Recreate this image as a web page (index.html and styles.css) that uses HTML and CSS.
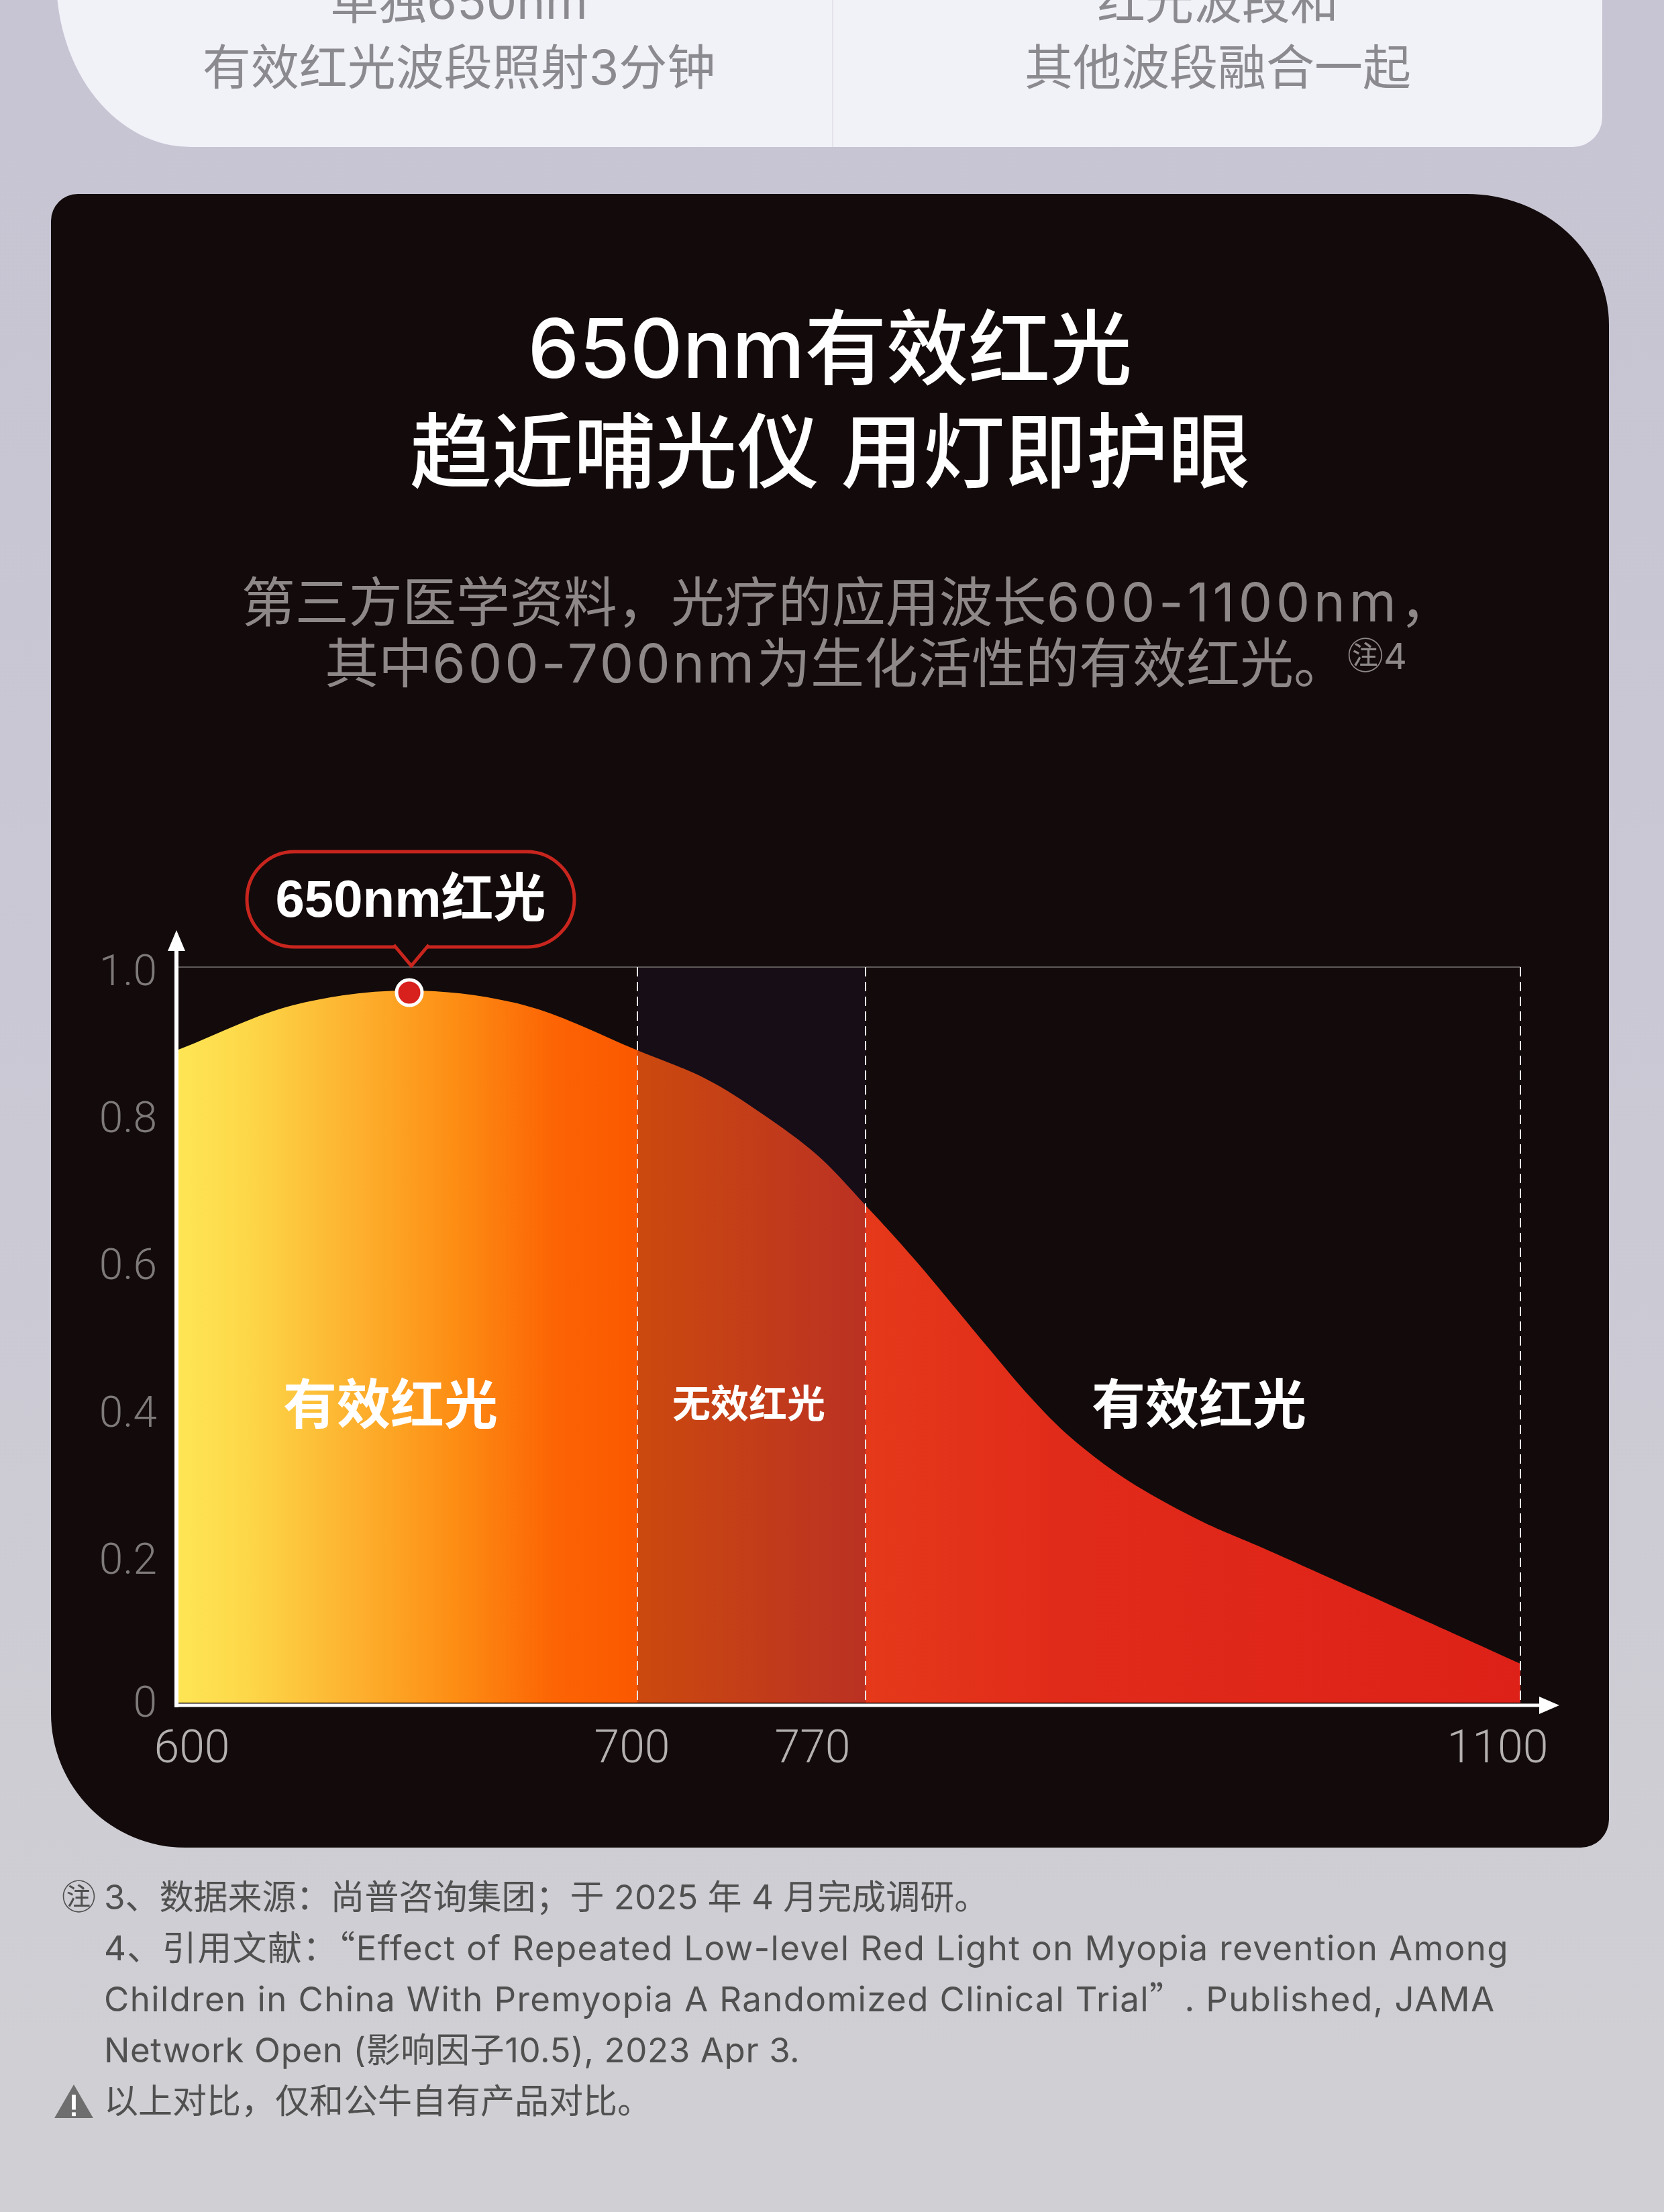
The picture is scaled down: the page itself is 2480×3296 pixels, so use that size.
FILE: index.html
```html
<!DOCTYPE html>
<html lang="zh-CN">
<head>
<meta charset="utf-8">
<title>650nm有效红光</title>
<link rel="stylesheet" href="styles.css">
</head>
<body>
<div class="compare">
  <div class="compare-col left">
    <div>单独650nm</div>
    <div>有效红光波段照射3分钟</div>
  </div>
  <div class="compare-col right">
    <div>红光波段和</div>
    <div>其他波段融合一起</div>
  </div>
</div>

<section class="panel">
  <h1 class="title">650nm有效红光<br>趋近哺光仪 用灯即护眼</h1>
  <div class="lead">
    <div class="lead-line first">第三方医学资料，光疗的应用波长<span class="num wide">600-1100nm</span>，</div>
    <div class="lead-line second">其中<span class="num">600-700nm</span>为生化活性的有效红光。<span class="ref">㊟4</span></div>
  </div>

  <svg class="chart" viewBox="0 0 2322 1430" xmlns="http://www.w3.org/2000/svg">
    <defs>
      <linearGradient id="spec" gradientUnits="userSpaceOnUse" x1="190" y1="0" x2="2190" y2="0">
        <stop offset="0" stop-color="#fee554"/>
        <stop offset="0.05" stop-color="#fdd849"/>
        <stop offset="0.13" stop-color="#fdb22f"/>
        <stop offset="0.205" stop-color="#fd8e14"/>
        <stop offset="0.28" stop-color="#fc6404"/>
        <stop offset="0.342" stop-color="#fb5800"/>
        <stop offset="0.512" stop-color="#e5391a"/>
        <stop offset="0.655" stop-color="#e12b1a"/>
        <stop offset="1" stop-color="#dd2118"/>
      </linearGradient>
    </defs>

    <path fill="url(#spec)" d="M190,1288 L190,315 C246.7,293 302.8,263.7 360,249 C417.2,234.3 475.3,227 533,227 C590.7,227 649.2,234.2 706,249 C762.8,263.8 829.2,297.8 874,316 C918.8,334.2 944.2,342.3 975,358 C1005.8,373.7 1031,390.8 1059,410 C1087,429.2 1117.2,450.2 1143,473 C1168.8,495.8 1189.5,520.7 1214,547 C1238.5,573.3 1259.8,596 1290,631 C1320.2,666 1367,723.7 1395,757 C1423,790.3 1437,808.2 1458,831 C1479,853.8 1496.5,873 1521,894 C1545.5,915 1573.3,936.7 1605,957 C1636.7,977.3 1675.8,998.5 1711,1016 C1746.2,1033.5 1763.5,1038.7 1816,1062 C1868.5,1085.3 1963.7,1128 2026,1156 C2088.3,1184 2135.3,1205.3 2190,1230 L2190,1288 Z"/>

    <rect x="874" y="192" width="340" height="1096" fill="rgba(35,22,70,0.22)"/>

    <line x1="190" y1="192" x2="2190" y2="192" stroke="#5f5959" stroke-width="2"/>
    <g stroke="#e8e4e4" stroke-width="2" stroke-dasharray="14 8">
      <line x1="874" y1="192" x2="874" y2="1289"/>
      <line x1="1214" y1="192" x2="1214" y2="1289"/>
      <line x1="2190" y1="192" x2="2190" y2="1289"/>
    </g>

    <line x1="187" y1="160" x2="187" y2="1295" stroke="#ffffff" stroke-width="6"/>
    <polygon points="187,137 174,168 200,168" fill="#ffffff"/>
    <line x1="184" y1="1292" x2="2225" y2="1292" stroke="#ffffff" stroke-width="5"/>
    <polygon points="2248,1292 2218,1279 2218,1305" fill="#ffffff"/>

    <text class="ylab" x="158" y="219">1.0</text>
    <text class="ylab" x="158" y="438">0.8</text>
    <text class="ylab" x="158" y="657">0.6</text>
    <text class="ylab" x="158" y="877">0.4</text>
    <text class="ylab" x="158" y="1096">0.2</text>
    <text class="ylab" x="158" y="1309">0</text>

    <text class="xlab" x="210" y="1377">600</text>
    <text class="xlab" x="866" y="1377">700</text>
    <text class="xlab" x="1135" y="1377">770</text>
    <text class="xlab" x="2156" y="1377">1100</text>

    <text class="zone" x="506" y="872">有效红光</text>
    <text class="zone zone-sm" x="1040" y="863">无效红光</text>
    <text class="zone" x="1711" y="872">有效红光</text>

    <circle cx="534" cy="230" r="19" fill="#d8201c" stroke="#ffffff" stroke-width="5"/>

    <rect x="292" y="20" width="488" height="142" rx="71" fill="#130b0b" stroke="#c8251e" stroke-width="5"/>
    <path d="M511,159 L537,190 L563,159" fill="#130b0b" stroke="#c8251e" stroke-width="5" stroke-linejoin="miter"/>
    <text class="callout-text" x="536" y="117">650nm红光</text>
  </svg>
</section>

<div class="notes">
  <div class="note-row"><span class="mark">㊟</span><span>3、数据来源：尚普咨询集团；于 2025 年 4 月完成调研。</span></div>
  <div class="note-line en">4、引用文献：<span class="cjk-q">“</span>Effect of Repeated Low-level Red Light on Myopia revention Among</div>
  <div class="note-line en">Children in China With Premyopia A Randomized Clinical Trial<span class="cjk-q">”</span>. Published, JAMA</div>
  <div class="note-line en-s">Network Open (影响因子10.5), 2023 Apr 3.</div>
  <div class="note-row">
    <svg class="warn" viewBox="0 0 62 54" xmlns="http://www.w3.org/2000/svg">
      <polygon points="31,1 61,53 1,53" fill="#6e6e6e"/>
      <rect x="28" y="17" width="6" height="23" fill="#ffffff"/>
      <rect x="28" y="44" width="6" height="6" fill="#ffffff"/>
    </svg>
    <span>以上对比，仅和公牛自有产品对比。</span>
  </div>
</div>
</body>
</html>
```

FILE: styles.css
```css
html, body {
  margin: 0;
  padding: 0;
}

body {
  width: 2480px;
  height: 3296px;
  overflow: hidden;
  background: linear-gradient(180deg, #c7c4d3 0%, #cac8d4 45%, #d0d0d4 100%);
  font-family: "Inter", "Noto Sans CJK SC", sans-serif;
}

/* top comparison card (cut off by the top of the page) */
.compare {
  margin: -300px 92px 0 84px;
  height: 519px;
  background: #f1f1f8;
  border-radius: 0 0 44px 200px / 0 0 44px 250px;
  display: grid;
  grid-template-columns: 1156px 1fr;
  overflow: hidden;
}

.compare-col {
  padding-top: 253px;
  text-align: center;
  font-size: 72px;
  line-height: 98px;
  color: #8b8a8f;
}

.compare-col.left {
  padding-left: 44px;
}

.compare-col.right {
  border-left: 2px solid #e3e2ea;
}

/* dark panel */
.panel {
  margin: 70px 82px 0 76px;
  background: #130b0b;
  border-radius: 40px 212px 42px 200px / 40px 195px 42px 200px;
  padding: 153px 0 74px;
}

.title {
  margin: 0;
  text-align: center;
  color: #ffffff;
  font-size: 122px;
  line-height: 154px;
  font-weight: 500;
}

.lead {
  margin-top: 101px;
  text-align: center;
  color: #8f8888;
  font-size: 80px;
  line-height: 91px;
}

.lead-line {
  height: 91px;
}

.lead-line.first {
  padding-left: 52px;
}

.lead-line.second {
  padding-left: 107px;
}

.num {
  letter-spacing: 0.05em;
}

.num.wide {
  letter-spacing: 0.07em;
}

.ref {
  font-size: 54px;
  line-height: 0;
  vertical-align: 20px;
}

.chart {
  display: block;
  margin-top: 216px;
  width: 2322px;
  height: 1430px;
}

.ylab {
  font-family: "Roboto", "Liberation Sans", sans-serif;
  font-weight: 300;
  font-size: 64px;
  fill: #7f7a7a;
  text-anchor: end;
}

.xlab {
  font-family: "Roboto", "Liberation Sans", sans-serif;
  font-weight: 300;
  font-size: 68px;
  fill: #b5b1b1;
  text-anchor: middle;
}

.zone {
  font-family: "Noto Sans CJK SC", sans-serif;
  font-weight: 700;
  font-size: 80px;
  fill: #ffffff;
  text-anchor: middle;
}

.zone-sm {
  font-size: 57px;
}

.callout-text {
  font-family: "Liberation Sans", "Noto Sans CJK SC", sans-serif;
  font-weight: 700;
  font-size: 78px;
  fill: #ffffff;
  text-anchor: middle;
}

/* footnotes */
.notes {
  margin-top: 36px;
  padding-left: 80px;
  font-family: "Inter", "Noto Sans CJK SC", sans-serif;
  font-size: 51px;
  line-height: 76px;
  color: #505050;
  white-space: nowrap;
}

.cjk-q {
  font-family: "Noto Sans CJK SC", sans-serif;
  line-height: 0;
}

.note-row {
  display: grid;
  grid-template-columns: 75px auto;
  align-items: center;
  height: 76px;
}

.note-line {
  padding-left: 75px;
  height: 76px;
}

.note-line.en {
  letter-spacing: 1.4px;
}

.note-line.en-s {
  letter-spacing: 0.6px;
}

.mark {
  text-align: center;
}

.warn {
  width: 60px;
  height: 52px;
  justify-self: start;
}
```
